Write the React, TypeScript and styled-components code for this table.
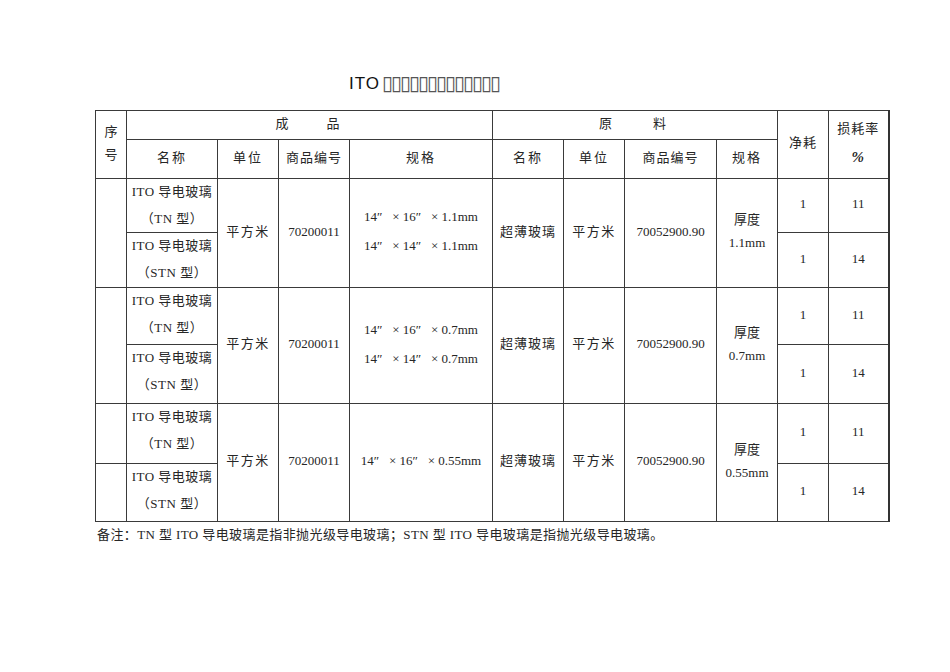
import styled, { createGlobalStyle } from 'styled-components';

const GlobalStyle = createGlobalStyle`
  html, body {
    margin: 0;
    padding: 0;
    background: #ffffff;
  }
`;

const Page = styled.div`
  width: 950px;
  min-height: 672px;
  box-sizing: border-box;
  padding: 74px 0 0 95px;
  font-family: "Liberation Serif", "Noto Sans CJK SC", serif;
  color: #262626;
`;

const Title = styled.h1`
  margin: 0 0 17px 254px;
  height: 19px;
  display: flex;
  align-items: center;
  gap: 2px;
  font-weight: 400;
  font-size: 17px;
  line-height: 19px;
  color: #111;
`;

const TitleLatin = styled.span`
  font-family: "Liberation Sans", Arial, sans-serif;
  letter-spacing: 1px;
`;

const Tofu = styled.span`
  font-family: "DejaVu Sans", sans-serif;
  font-size: 20px;
  letter-spacing: -2px;
  color: #555;
`;

const Table = styled.table`
  width: 793px;
  table-layout: fixed;
  border-collapse: collapse;
  border-right: 2px solid #333;
  font-size: 13px;
`;

const Cell = styled.td<{ $top?: boolean; $spaced?: number }>`
  border: 1px solid #3a3a3a;
  padding: ${(p) => (p.$top ? '0' : '0 0 4px 0')};
  text-align: center;
  vertical-align: ${(p) => (p.$top ? 'top' : 'middle')};
  line-height: ${(p) => (p.$top ? '26.5px' : '23px')};
  letter-spacing: ${(p) => (p.$spaced ?? 0)}px;
  white-space: nowrap;
`;

const Row = styled.tr<{ $h: number }>`
  height: ${(p) => p.$h}px;
`;

const Percent = styled.span`
  font-size: 15px;
  font-weight: 700;
  font-style: italic;
`;

const Stack = styled.div`
  line-height: 29px;
`;

const Spec = styled.div`
  line-height: 29px;
  white-space: pre;
`;

const Note = styled.p`
  margin: 5px 0 0 2px;
  font-size: 13px;
  letter-spacing: 0.4px;
  line-height: 16px;
`;

const widths = [31, 91, 61, 71, 143, 71, 61, 92, 61, 51, 60];

interface Group {
  specs: string[];
  thick: string;
  heights: [number, number];
  splitIndex: boolean;
}

const groups: Group[] = [
  {
    specs: ['14″   × 16″   × 1.1mm', '14″   × 14″   × 1.1mm'],
    thick: '1.1mm',
    heights: [53, 55],
    splitIndex: false,
  },
  {
    specs: ['14″   × 16″   × 0.7mm', '14″   × 14″   × 0.7mm'],
    thick: '0.7mm',
    heights: [57, 59],
    splitIndex: false,
  },
  {
    specs: ['14″   × 16″   × 0.55mm'],
    thick: '0.55mm',
    heights: [60, 58],
    splitIndex: true,
  },
];

const names = [
  ['ITO 导电玻璃', '（TN 型）'],
  ['ITO 导电玻璃', '（STN 型）'],
];
const losses = ['11', '14'];

export default function App() {
  return (
    <>
      <GlobalStyle />
      <Page>
        <Title>
          <TitleLatin>ITO</TitleLatin>
          <Tofu>▯▯▯▯▯▯▯▯▯▯▯▯▯</Tofu>
        </Title>

        <Table>
          <colgroup>
            {widths.map((w, i) => (
              <col key={i} style={{ width: w }} />
            ))}
          </colgroup>
          <tbody>
            <Row $h={29}>
              <Cell rowSpan={2}>
                序
                <br />号
              </Cell>
              <Cell colSpan={4} $spaced={4}>
                成　　品
              </Cell>
              <Cell colSpan={4} $spaced={5}>
                原　　料
              </Cell>
              <Cell rowSpan={2} $spaced={1}>
                净耗
              </Cell>
              <Cell rowSpan={2} $spaced={1}>
                <Stack>
                  损耗率
                  <br />
                  <Percent>%</Percent>
                </Stack>
              </Cell>
            </Row>
            <Row $h={39}>
              <Cell $spaced={2}>名称</Cell>
              <Cell $spaced={2}>单位</Cell>
              <Cell $spaced={1}>商品编号</Cell>
              <Cell $spaced={2}>规格</Cell>
              <Cell $spaced={2}>名称</Cell>
              <Cell $spaced={2}>单位</Cell>
              <Cell $spaced={1}>商品编号</Cell>
              <Cell $spaced={2}>规格</Cell>
            </Row>

            {groups.map((g, gi) =>
              [0, 1].map((r) => (
                <Row key={`${gi}-${r}`} $h={g.heights[r]}>
                  {g.splitIndex ? (
                    <Cell />
                  ) : (
                    r === 0 && <Cell rowSpan={2} />
                  )}
                  <Cell $top $spaced={0.5}>
                    {names[r][0]}
                    <br />
                    {names[r][1]}
                  </Cell>
                  {r === 0 && (
                    <>
                      <Cell rowSpan={2} $spaced={1.5}>
                        平方米
                      </Cell>
                      <Cell rowSpan={2}>70200011</Cell>
                      <Cell rowSpan={2}>
                        {g.specs.map((s) => (
                          <Spec key={s}>{s}</Spec>
                        ))}
                      </Cell>
                      <Cell rowSpan={2} $spaced={1}>
                        超薄玻璃
                      </Cell>
                      <Cell rowSpan={2} $spaced={1.5}>
                        平方米
                      </Cell>
                      <Cell rowSpan={2}>70052900.90</Cell>
                      <Cell rowSpan={2}>
                        厚度
                        <br />
                        {g.thick}
                      </Cell>
                    </>
                  )}
                  <Cell>1</Cell>
                  <Cell>{losses[r]}</Cell>
                </Row>
              ))
            )}
          </tbody>
        </Table>

        <Note>
          备注：TN 型 ITO 导电玻璃是指非抛光级导电玻璃；STN 型 ITO 导电玻璃是指抛光级导电玻璃。
        </Note>
      </Page>
    </>
  );
}
